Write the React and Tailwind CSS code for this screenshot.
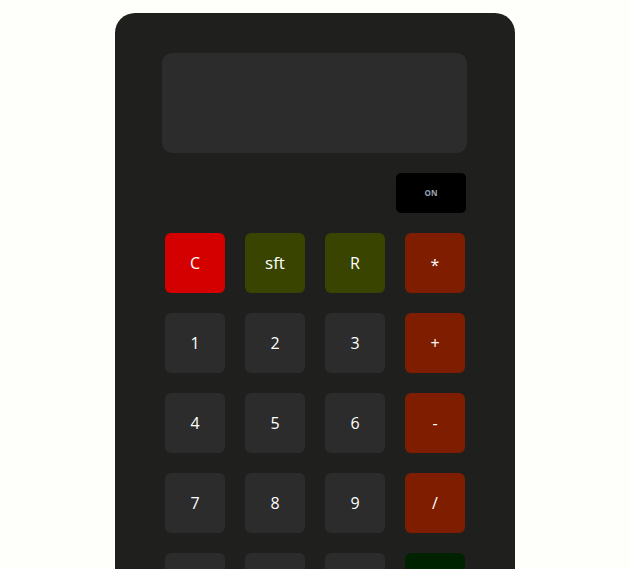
import React from 'react';

// Calculator keypad layout
const KEYS = [
  { label: 'C', cls: 'bg-[#d40000]' },
  { label: 'sft', cls: 'bg-[#384400] text-[17px]' },
  { label: 'R', cls: 'bg-[#384400]' },
  { label: '*', cls: 'bg-[#7f1d00] text-[12px] pt-[3px]' },
  { label: '1' },
  { label: '2' },
  { label: '3' },
  { label: '+', cls: 'bg-[#7f1d00] text-[13px]' },
  { label: '4' },
  { label: '5' },
  { label: '6' },
  { label: '-', cls: 'bg-[#7f1d00] text-[13px]' },
  { label: '7' },
  { label: '8' },
  { label: '9' },
  { label: '/', cls: 'bg-[#7f1d00]' },
  { label: '0' },
  { label: '.' },
  { label: '00' },
  { label: '=', cls: 'bg-[#002200]' },
];

const Key = ({ label, cls }) => (
  <button
    className={`w-[60px] h-[60px] rounded-[6px] flex items-center justify-center text-white text-[16px] ${cls || 'bg-[#2c2c2c]'}`}
  >
    {label}
  </button>
);

const App = () => {
  return (
    <div
      className="min-h-screen bg-[#fefefa] flex justify-center pt-[13px]"
      style={{ fontFamily: '"Open Sans", "Noto Sans", sans-serif' }}
    >
      <div className="w-[400px] h-[700px] bg-[#1f1f1d] rounded-[20px] px-[50px] pt-[40px]">
        <div className="-ml-[3px] -mr-[2px] h-[100px] bg-[#2c2c2c] rounded-[10px]" />

        <div className="flex justify-end mt-[20px] -mr-[1px]">
          <button className="w-[70px] h-[40px] bg-black rounded-[5px] text-[8px] font-bold text-[#9aa6b4]">
            ON
          </button>
        </div>

        <div className="grid grid-cols-4 gap-[20px] mt-[20px]">
          {KEYS.map((k) => (
            <Key key={k.label} {...k} />
          ))}
        </div>
      </div>
    </div>
  );
};

export default App;
